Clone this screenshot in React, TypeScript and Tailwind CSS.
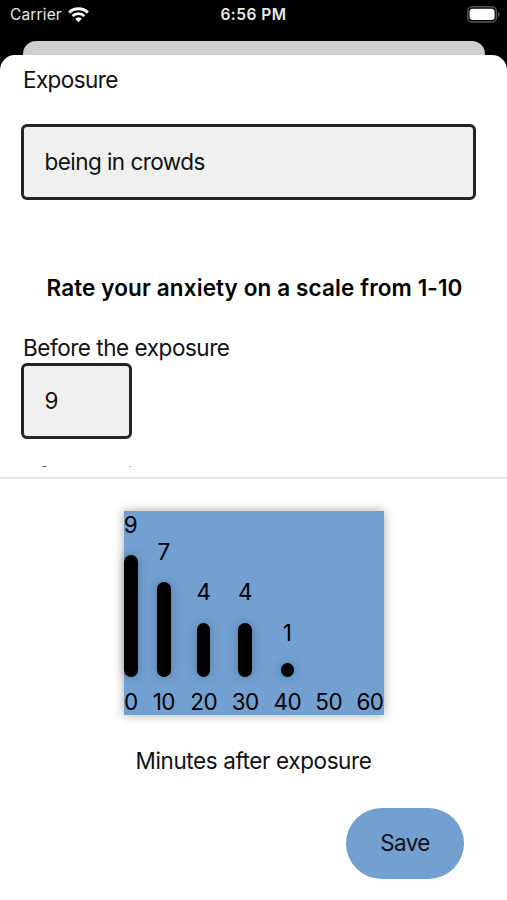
import { useState } from "react";

type Rating = { minutes: number; value: number | null; width: string };

const RATINGS: Rating[] = [
  { minutes: 0, value: 9, width: "w-[13.5px]" },
  { minutes: 10, value: 7, width: "w-[25px]" },
  { minutes: 20, value: 4, width: "w-[27px]" },
  { minutes: 30, value: 4, width: "w-[28.5px]" },
  { minutes: 40, value: 1, width: "w-[28px]" },
  { minutes: 50, value: null, width: "w-[27px]" },
  { minutes: 60, value: null, width: "w-[28px]" },
];

const BAR_UNIT = 13.5;

export default function App() {
  const [exposure, setExposure] = useState("being in crowds");
  const [before, setBefore] = useState("9");

  return (
    <div className="flex h-[900px] w-[507px] flex-col overflow-hidden bg-black font-['Inter','Liberation_Sans',sans-serif] text-[22.5px] text-[#111]">
      <StatusBar />
      <div className="mx-[22.5px] h-[14px] shrink-0 rounded-t-[13px] bg-[#cecece]" />

      <main className="flex min-h-0 flex-1 flex-col rounded-t-[15px] bg-white">
        <section className="h-[412px] shrink-0 overflow-hidden pl-[21px]">
          <label htmlFor="exposure" className="block h-[69px] pt-[11px] pl-[2px] leading-7 tracking-[-0.6px]">
            Exposure
          </label>
          <input
            id="exposure"
            value={exposure}
            onChange={(e) => setExposure(e.target.value)}
            className="block h-[76px] w-[455px] rounded-[6px] border-3 border-[#242426] bg-[#f0f0f0] px-[20.5px] pb-[2px] tracking-[-0.55px] outline-none"
          />
          <h1 className="mt-[74px] ml-[25.5px] h-7 leading-7 font-semibold tracking-[0.12px] whitespace-nowrap text-black">
            Rate your anxiety on a scale from 1-10
          </h1>
          <label htmlFor="before" className="mt-8 ml-[2px] block h-[29px] leading-7 tracking-[-0.46px]">
            Before the exposure
          </label>
          <input
            id="before"
            value={before}
            onChange={(e) => setBefore(e.target.value)}
            className="block h-[76px] w-[111px] rounded-[6px] border-3 border-[#242426] bg-[#f0f0f0] px-[20.5px] pb-[2px] outline-none"
          />
          <p className="mt-[23px] ml-[2px] leading-7 tracking-[-0.3px]">After 10 min</p>
        </section>

        <section className="mt-[10px] flex flex-1 flex-col border-t-2 border-[#e6e6e7]">
          <RatingsChart />
          <p className="mt-8 text-center leading-7 tracking-[-0.4px]">Minutes after exposure</p>
          <button
            type="button"
            className="mt-[33px] mr-[43px] h-[71px] w-[118px] self-end rounded-full bg-[#71a0d1] pb-px tracking-[-0.7px]"
          >
            Save
          </button>
        </section>
      </main>
    </div>
  );
}

function StatusBar() {
  return (
    <header className="grid h-[41px] shrink-0 grid-cols-3 items-start px-[10px] pt-[5px] text-[15.5px] leading-5 text-[#e8e8e8]">
      <div className="flex items-center gap-[6px]">
        <span className="tracking-[0.15px]">Carrier</span>
        <svg width="21" height="16" viewBox="0 0 21 16" fill="none" aria-hidden="true">
          <path d="M1.2 5.6C6.3.6 14.7.6 19.8 5.6" stroke="#fff" strokeWidth="3" />
          <path d="M4.6 9.1c3.2-3.2 8.6-3.2 11.8 0" stroke="#fff" strokeWidth="2.7" />
          <path d="M7.2 11.8c1.8-1.8 4.8-1.8 6.6 0L10.5 15.2z" fill="#fff" />
        </svg>
      </div>
      <span className="text-center font-semibold tracking-[0.5px]">6:56 PM</span>
      <svg className="mt-px -mr-[3px] justify-self-end" width="33" height="17" viewBox="0 0 33 17" aria-hidden="true">
        <rect x=".8" y=".8" width="28.6" height="15.2" rx="4.6" fill="none" stroke="#555" strokeWidth="1.5" />
        <rect x="2.6" y="2.7" width="25" height="11.4" rx="3" fill="#fff" />
        <path d="M31 5.8c2 .8 2 4.4 0 5.2z" fill="#555" />
      </svg>
    </header>
  );
}

function RatingsChart() {
  return (
    <div className="mt-[32px] ml-[124px] flex h-[204px] w-[260px] items-end justify-between bg-[#71a0d1] text-black shadow-[0_0_10px_rgba(0,0,0,0.35)]">
      {RATINGS.map(({ minutes, value, width }) => (
        <div key={minutes} className={`flex flex-col items-center ${width}`}>
          {value !== null && (
            <>
              <span className="mb-[16.5px] leading-7">{value}</span>
              <div
                className="w-[13.5px] rounded-full bg-black shadow-[0_0_10px_rgba(0,0,0,0.25)]"
                style={{ height: value * BAR_UNIT }}
              />
            </>
          )}
          <span className="mt-[11.4px] leading-[27px] tracking-[-0.5px]">{minutes}</span>
        </div>
      ))}
    </div>
  );
}
